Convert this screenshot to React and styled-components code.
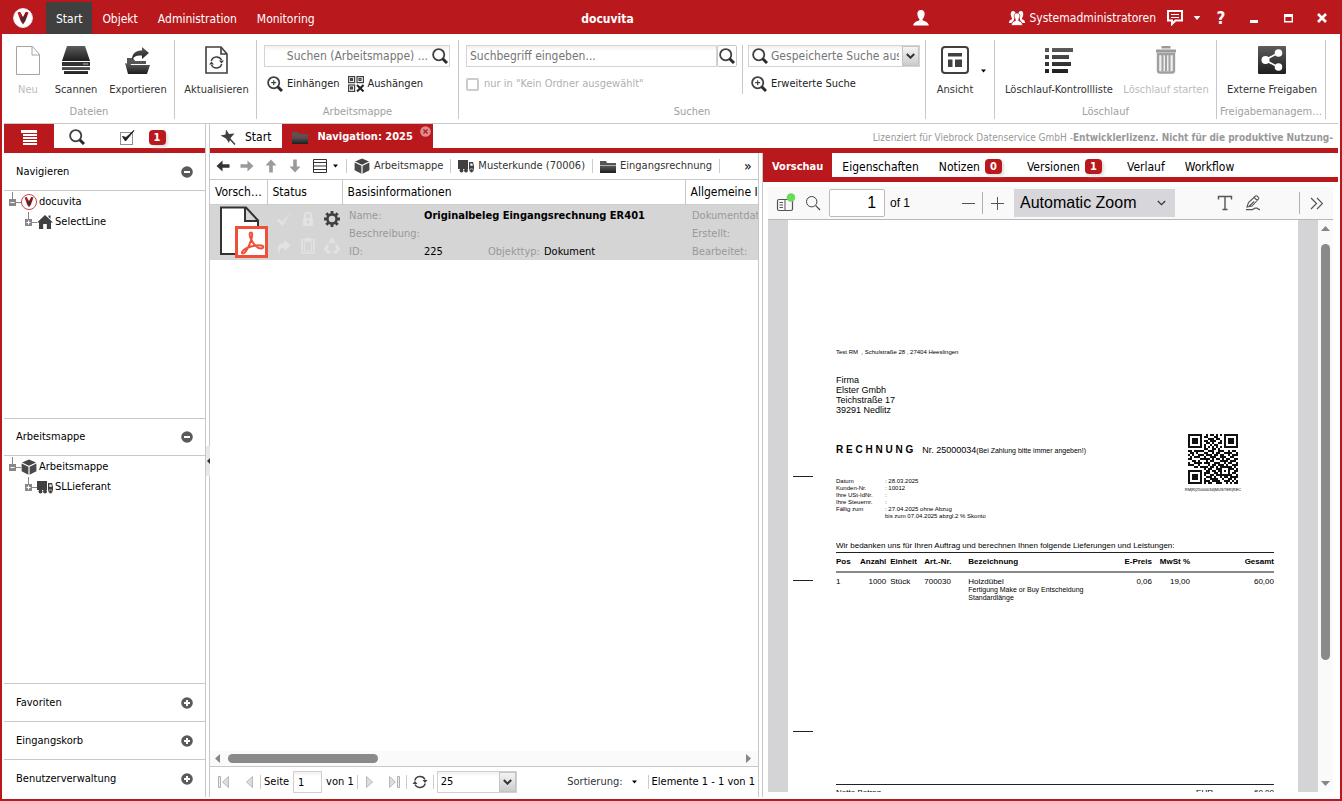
import React from "react";
import styled, { createGlobalStyle, css } from "styled-components";

const RED = "#b9181d";
const LINE = "#c8c8c8";
const INK = "#404040";
const UI_FONT = '"DejaVu Sans Condensed", "DejaVu Sans", sans-serif';
const DOC_FONT = '"Liberation Sans", Arial, sans-serif';

const Global = createGlobalStyle`
  *, *::before, *::after { box-sizing: border-box; }
  body { margin: 0; font: 11px/16px ${UI_FONT}; color: #000; background: #fff; }
  button, input, select { font: inherit; color: inherit; margin: 0; padding: 0; border: 0; border-radius: 0; background: none; }
  button { white-space: nowrap; cursor: pointer; }
  a { color: inherit; text-decoration: none; }
  h1, h2, p, ul { margin: 0; padding: 0; font-size: inherit; font-weight: inherit; list-style: none; }
  table { border-collapse: collapse; }
  svg { display: block; flex: none; }
`;

/* ---------- icons ---------- */

const Svg = ({ w = 16, h = w, vb = `0 0 ${w} ${h}`, children }) => (
  <svg width={w} height={h} viewBox={vb} aria-hidden="true">{children}</svg>
);

const Defs = () => (
  <svg width="0" height="0" aria-hidden="true">
    <defs>
      <linearGradient id="ink" x1="0" y1="0" x2="0" y2="1">
        <stop offset="0" stopColor="#5c5c5c" />
        <stop offset="1" stopColor="#1e1e1e" />
      </linearGradient>
    </defs>
  </svg>
);

const LogoIcon = ({ size = 20, ring }) => (
  <Svg w={size} vb="0 0 20 20">
    <circle cx="10" cy="10" r="9.4" fill="#fff" stroke={ring || "#eee"} strokeWidth="1" />
    <path d="M4.500 4.500 7.200 3.800 10 9v7.500L7.600 13z" fill={RED} />
    <path d="M15.500 4.500 12.800 3.800 10 9v7.500l2.400-3.500z" fill="#8e1116" />
    <path d="M8 6.500 10 10l2-3.500v5.500L10 14.500 8 12z" fill="#333" />
  </Svg>
);

const PageIcon = () => (
  <Svg w={24} h={29}>
    <path d="M.5.500h16l7 8v20H.500zM16 .5v8.500h7.500" fill="#fff" stroke="#a4a4a4" />
  </Svg>
);

const ScanIcon = () => (
  <Svg w={28} h={28}>
    <path d="M5 0h18l5 15H0z" fill="url(#ink)" />
    <path d="M0 16h28v4H0z" fill="#333" />
    <path d="M0 21h28v3H0zM2 25h24v3H2z" fill="url(#ink)" />
    <path d="M21 17.500h5v1h-5z" fill="#bbb" />
  </Svg>
);

const ExportIcon = () => (
  <Svg w={26} h={28}>
    <path d="M2 12h6l2 3h11v3H6L4 25 2 22z" fill="#555" />
    <path d="M5 19h20l-3 9H3L0 17l3 1z" fill="url(#ink)" />
    <path d="M7 14C7 7 11 4.500 17 4.500V1l7 6-7 6V9.500C12 9 9 10 7 14z" fill="url(#ink)" />
  </Svg>
);

const SyncArrows = () => (
  <g fill="none" stroke={INK} strokeWidth="1.500">
    <path d="M2.800 6.500a5.500 5.500 0 0 1 10.200-1M13.200 9.500A5.500 5.500 0 0 1 3 10.500" />
    <path d="M10.500 6h5L13 9zM5.500 10h-5L3 7z" fill={INK} stroke="none" />
  </g>
);

const SyncIcon = () => <Svg w={16}><SyncArrows /></Svg>;

const RefreshPageIcon = () => (
  <Svg w={23} h={28}>
    <path d="M1 1h15l6 7v19H1zM16 1v7h6" fill="#fff" stroke={INK} strokeWidth="1.600" />
    <g transform="translate(3.500 8.500)"><SyncArrows /></g>
  </Svg>
);

const LensIcon = ({ plus, thin, size = 16 }) => (
  <Svg w={size} vb="0 0 16 16">
    <circle cx="6.700" cy="6.700" r={thin ? 5.2 : 5.6} fill="none" stroke={INK} strokeWidth={thin ? 1 : 1.800} />
    <path d="m10.700 10.700 4.300 4.300" stroke={thin ? INK : "#2a2a2a"} strokeWidth={thin ? 1.200 : 3} />
    {plus && <path d="M4.200 6.700h5M6.700 4.200v5" stroke={INK} strokeWidth="1.200" />}
  </Svg>
);

const DetachIcon = () => (
  <Svg w={16}>
    <g fill="#fff" stroke={INK} strokeWidth="1.200">
      <rect x=".6" y=".6" width="6" height="6" /><rect x="9" y=".6" width="6.400" height="6" />
      <rect x=".6" y="9" width="6" height="6.400" />
      <rect x="2.500" y="2.500" width="2" height="2" /><rect x="11" y="2.500" width="2" height="2" /><rect x="2.500" y="11" width="2" height="2" />
    </g>
    <path d="m9 9 6.500 6.500m0-6.500L9 15.500" stroke="#222" strokeWidth="2" />
  </Svg>
);

const LayoutIcon = () => (
  <Svg w={28}>
    <rect x="1" y="1" width="26" height="26" rx="3" fill="#fff" stroke={INK} strokeWidth="2" />
    <path d="M7 7h14v3.500H7zM7 13.500h4.500V21H7zM14 13.500h7V21h-7z" fill={INK} />
  </Svg>
);

const ListIcon = () => (
  <Svg w={28} h={26}>
    <path d="M0 1h4v4H0zM7 1h21v4H7zM0 8h4v4H0zM7 8h17v4H7zM0 15h4v4H0zM7 15h19v4H7zM0 22h4v4H0zM7 22h16v4H7z" fill="url(#ink)" />
  </Svg>
);

const TrashIcon = () => (
  <Svg w={22} h={28}>
    <path d="M8 2.500V1h6v1.500M1 5h20" stroke="#9a9a9a" strokeWidth="3" fill="none" />
    <path d="M3 8v16.500c0 1.500.5 2 2 2h12c1.500 0 2-.5 2-2V8z" fill="#eee" stroke="#a0a0a0" strokeWidth="2.400" />
    <path d="M7.500 9v16M11 9v16M14.500 9v16" stroke="#a0a0a0" strokeWidth="2" />
  </Svg>
);

const ShareIcon = () => (
  <Svg w={28}>
    <rect width="28" height="28" rx="1" fill="url(#ink)" />
    <path d="M7 14 20 7M7 14l13 7" stroke="#fff" strokeWidth="1.600" />
    <circle cx="7.500" cy="14" r="4" fill="#fff" /><circle cx="20.500" cy="7" r="3.800" fill="#fff" /><circle cx="20.500" cy="21" r="3.800" fill="#fff" />
  </Svg>
);

const UserIcon = () => (
  <Svg w={16}>
    <path d="M8 0c2.500 0 4 2 3.600 4.500C11.300 6.500 10.500 8 9.600 9v1.300c1.500.9 5.900 1.500 6.200 5.200H.2c.3-3.700 4.700-4.300 6.200-5.200V9C5.500 8 4.700 6.500 4.400 4.500 4 2 5.500 0 8 0z" fill="#fff" />
  </Svg>
);

const GroupIcon = () => (
  <Svg w={16}>
    <path d="M4 1c1.800 0 2.800 1.300 2.500 3.500L6 7.500 5 9v1L2.500 13H0c0-2.500 1-3 3-3.800V8C1.500 6.500.8 1 4 1zM12 1c-1.800 0-2.800 1.300-2.500 3.500l.5 3 1 1.500v1l2.500 3H16c0-2.500-1-3-3-3.800V8c1.500-1.500 2.200-7-1-7z" fill="#fff" />
    <path d="M8 3c2.200 0 3.200 1.700 2.800 3.700L9.700 9.500v1.200c1.500.6 3.600 1.200 3.800 4.800h-11c.2-3.600 2.300-4.200 3.800-4.800V9.500L5.200 6.700C4.800 4.700 5.800 3 8 3z" fill="#fff" stroke={RED} strokeWidth=".7" />
  </Svg>
);

const ChatIcon = () => (
  <Svg w={16}>
    <path d="M1 1h14v9.500H8.500L5 14v-3.500H1z" fill="none" stroke="#fff" strokeWidth="2" />
    <path d="M4 4.500h8M4 7.500h8" stroke="#fff" strokeWidth="1.200" />
  </Svg>
);

const Caret = ({ color = "#000", size = 5 }) => (
  <Svg w={size} h={4} vb="0 0 5 3"><path d="M0 0h5L2.500 3z" fill={color} /></Svg>
);

const MinIcon = () => <Svg w={10} h={12}><path d="M1 8h8v3H1z" fill="#fff" /></Svg>;
const MaxIcon = () => <Svg w={9}><path d="M.7 1.500h7.600v6.300H.7z" fill="none" stroke="#fff" strokeWidth="1.400" /><path d="M0 0h9v3H0z" fill="#fff" /></Svg>;
const CloseIcon = () => <Svg w={10}><path d="m1 1 8 8m0-8L1 9" stroke="#fff" strokeWidth="2.600" /></Svg>;

const MenuIcon = () => (
  <Svg w={16} h={15}><path d="M0 0h16v3H0zM2 4h14v2H2zM2 7h14v2H2zM2 10h14v2H2zM2 13h14v2H2z" fill="#fff" /></Svg>
);

const TickBoxIcon = () => (
  <Svg w={16}>
    <rect x="1.500" y="3.500" width="12" height="12" fill="none" stroke="#222" strokeDasharray="1 1" />
    <path d="m3.500 7.500 3 4.500L15 1.500 7 8.500z" fill="#222" stroke="#222" />
  </Svg>
);

const PinIcon = () => (
  <Svg w={16}>
    <path d="M6 .5 9 5l5.500-.5-4 4.500L9 14 6 9.500.5 6.500 5.500 5.500z" fill={INK} />
    <path d="m9 9 6 6.500" stroke={INK} strokeWidth="1.500" />
  </Svg>
);

const FolderIcon = () => (
  <Svg w={16} h={13}><path d="M0 1h6l1 2h9v2H0z" fill="#555" /><path d="M0 5.500h16V13H0z" fill="url(#ink)" /></Svg>
);

const TabCloseIcon = () => (
  <Svg w={11}><circle cx="5.500" cy="5.500" r="5.300" fill="#dc8c8e" /><path d="m3.500 3.500 4 4m0-4-4 4" stroke={RED} strokeWidth="1.300" /></Svg>
);

const ToggleIcon = ({ plus }) => (
  <Svg w={12}>
    <circle cx="6" cy="6" r="5.800" fill="#5a5a5a" />
    <path d={plus ? "M3 6h6M6 3v6" : "M3 6h6"} stroke="#fff" strokeWidth="2" />
  </Svg>
);

const HouseIcon = () => (
  <Svg w={16}><path d="M8 1 16 8.500h-2V15H9.800v-5H6.200v5H2V8.500H0zM11.500 1.500h2v3.500l-2-2z" fill={INK} /></Svg>
);

const BoxIcon = () => (
  <Svg w={16}>
    <path d="m8 .5 7 3-7 3.300-7-3.300z" fill="#444" />
    <path d="m.6 4.500 6.800 3.200v8L.6 12.200zM15.400 4.500 8.600 7.700v8l6.800-3.500z" fill="#4a4a4a" />
  </Svg>
);

const TruckIcon = () => (
  <Svg w={16} h={13}>
    <path d="M0 0h10v9H0zM11 2h4l1 4v5h-5z" fill={INK} /><path d="M12.300 3.500h2l.6 2.300h-2.600z" fill="#fff" />
    <circle cx="3.500" cy="10.500" r="2" fill={INK} /><circle cx="8" cy="10.500" r="2" fill={INK} /><circle cx="13.500" cy="10.700" r="2" fill={INK} stroke="#fff" strokeWidth=".6" />
  </Svg>
);

const ArrowIcon = ({ turn = 0, color = "#9a9a9a" }) => (
  <Svg w={14} vb="0 0 14 14">
    <path transform={`rotate(${turn} 7 7)`} d="M.5 7 6.500 1.500v3.700h7v3.600h-7v3.700z" fill={color} />
  </Svg>
);

const RowsIcon = () => (
  <Svg w={14}><path d="M.5.500h13v13H.5zM.5 3.500h13M.5 7h13M.5 10.500h13" fill="none" stroke="#333" /></Svg>
);

const PdfFileIcon = () => (
  <Svg w={48} h={52}>
    <path d="M1 1.500h25l12 13V48H1zM25 1.500V15h13" fill="#fff" stroke="#333" strokeWidth="2" />
    <rect x="16.500" y="21.500" width="30" height="29" fill="#fff" stroke="#ef5038" strokeWidth="3" />
    <path d="M31 26.500c-2 0-1.600 3 0 6.500 2 4.600 6 9.500 10 9.500 3 0 3-2.700 0-3-4.500-.5-11 .8-15 3-3.500 2-5 4.500-3.500 5 2 .6 5-4.500 7-9 2-4.300 4-12 1.500-12z" fill="none" stroke="#ef5038" strokeWidth="2" />
  </Svg>
);

const GearIcon = () => (
  <Svg w={16}>
    <circle cx="8" cy="8" r="4.600" fill="none" stroke={INK} strokeWidth="2.600" />
    <path d="M8 0v3M8 13v3M0 8h3M13 8h3M2.300 2.300l2.200 2.200M11.500 11.500l2.200 2.200M2.300 13.700l2.200-2.200M11.500 4.500l2.200-2.200" stroke={INK} strokeWidth="2.800" />
  </Svg>
);

const FAINT = "#e2e2e2";
const CheckFaint = () => <Svg w={16}><path d="m1 9 2-1.500L6 11l8.500-9L6.500 15z" fill={FAINT} /></Svg>;
const LockFaint = () => <Svg w={16}><path d="M3 7h10v8H3z" fill={FAINT} /><path d="M5 7V4.500a3 3 0 0 1 6 0V7" fill="none" stroke={FAINT} strokeWidth="2" /><path d="M7.300 9.500h1.400v3H7.300z" fill="#c8c8c8" /></Svg>;
const ForwardFaint = () => <Svg w={16}><path d="M8 2 15 7.500 8 13v-3.500c-3 0-4 1.500-4.500 5.500C0 10 2 5 8 5z" fill={FAINT} /></Svg>;
const ClipFaint = () => <Svg w={16}><path d="M2 2h12v13H2z" fill="none" stroke={FAINT} strokeWidth="1.600" /><path d="M4.500 4h7v9h-7z" fill="none" stroke={FAINT} /><path d="M5 0h6v3H5z" fill={FAINT} /></Svg>;
const RecycleFaint = () => <Svg w={16}><path d="M5.500 5 8 1.500 10.500 5M12 7l2.500 4-2.500 3H9.500M6.500 14H4l-2.500-3L4 7" fill="none" stroke={FAINT} strokeWidth="2.800" /></Svg>;

const StepIcon = ({ next, bar }) => (
  <Svg w={12} h={14}>
    <g transform={next ? "translate(12 0) scale(-1 1)" : undefined}>
      {bar && <path d="M.5 1.500h2v11h-2z" fill="#eee" stroke="#b0b0b0" />}
      <path d="M10.500 1.500v11L4.500 7z" fill="#ddd" stroke="#b8b8b8" />
    </g>
  </Svg>
);

const ScrollArrow = ({ turn = 0 }) => (
  <Svg w={9} vb="0 0 9 9"><path transform={`rotate(${turn} 4.500 4.500)`} d="M4.500 2 9 7H0z" fill="#868686" /></Svg>
);

const SidebarIcon = () => (
  <Svg w={20} h={20}>
    <rect x="2.500" y="6.500" width="15" height="11" rx="1.500" fill="none" stroke="#555" strokeWidth="1.200" />
    <path d="M10 6.500v11M4.500 9.500h3.500M4.500 12h3.500M4.500 14.500h3.500" stroke="#555" />
    <circle cx="16" cy="4.500" r="4.300" fill="#66dd55" />
  </Svg>
);

const TextToolIcon = () => (
  <Svg w={16}><path d="M1.500 4.500v-3h13v3M8 1.500v13M5.500 14.500h5" fill="none" stroke="#555" strokeWidth="1.400" /></Svg>
);
const DrawToolIcon = () => (
  <Svg w={16}>
    <path d="m2 12 1.500-4.500 7-6.500c1-1 4 1.500 3 3L7 11zM9.500 3l3 2.500M4 11.500l5-5" fill="none" stroke="#555" strokeWidth="1.100" />
    <path d="M1 14.700h5.500c2 0 2-1.500 4-1.500h1.500c1 0 1 1.500 3 1.500" fill="none" stroke="#555" strokeWidth="1.200" />
  </Svg>
);
const MoreIcon = () => <Svg w={13}><path d="m1 1 5.500 5.500L1 12M7 1l5.500 5.500L7 12" fill="none" stroke="#555" strokeWidth="1.200" /></Svg>;
const ChevronIcon = ({ bold, color = "#333" }) => (
  <Svg w={9} h={6}><path d="m.8 1 3.700 3.700L8.200 1" fill="none" stroke={color} strokeWidth={bold ? 2 : 1.200} /></Svg>
);
const MinusIcon = () => <Svg w={13}><path d="M0 6.500h13" stroke="#555" /></Svg>;
const PlusIcon = () => <Svg w={13}><path d="M0 6.500h13M6.500 0v13" stroke="#555" /></Svg>;

const QR_ROWS = [
  "1111111001011010101111111", "1000001011000110001000001", "1011101000111011001011101",
  "1011101011011100101011101", "1011101001101001101011101", "1000001010010110001000001",
  "1111111010101010101111111", "0000000011001101000000000", "1101111100111001110010110",
  "0110100011001011001111001", "1010011101110110110010111", "0101110010011100111001100",
  "1100001111101011010110011", "0011010001011000111101110", "1001111011100111001011001",
  "1110010000101101110100111", "0001101111011010111111010", "0000000010110011100011101",
  "1111111001101101101010011", "1000001011100110100010110", "1011101010011011111111001",
  "1011101001110100101101111", "1011101010011110010011010", "1000001011101111001110101",
  "1111111010110011100101011",
];
const QR_PATH = QR_ROWS.map((r, y) => [...r].map((c, x) => (c === "1" ? `M${x} ${y}h1v1h-1z` : "")).join("")).join("");
const QrCode = () => <Svg w={50} vb="0 0 25 25"><path d={QR_PATH} fill="#111" shapeRendering="crispEdges" /></Svg>;

/* ---------- window frame ---------- */

const Window = styled.div`
  display: flex;
  flex-direction: column;
  height: 100vh;
  background: #fff;
  border: 2px solid ${RED};
  border-top: 0;
  overflow: hidden;
`;

const TitleBar = styled.header`
  display: flex;
  align-items: stretch;
  flex: none;
  height: 34px;
  background: ${RED};
  color: #fff;
  font-size: 12px;
`;
const LogoBox = styled.div`
  display: flex;
  align-items: center;
  justify-content: center;
  width: 42px;
  margin-right: 2px;
  padding-top: 2px;
`;
const MenuTab = styled.button`
  margin-top: 2px;
  padding: 2px 10px 0;
  background: ${(p) => (p.$active ? "#404040" : "none")};
`;
const Title = styled.h1`
  flex: 1;
  text-align: center;
  font-weight: bold;
  line-height: 38px;
`;
const TitleActions = styled.div`
  display: flex;
  align-items: center;
  padding-top: 2px;
`;
const TitleButton = styled.button`
  display: flex;
  align-items: center;
  justify-content: center;
  gap: 5px;
  width: ${(p) => p.$width || "auto"};
  font-size: ${(p) => (p.$big ? "17px" : "inherit")};
  font-weight: ${(p) => (p.$big ? "bold" : "inherit")};
`;
const RoleButton = styled(TitleButton)`
  margin-left: 58px;
  padding-right: 6px;
`;

/* ---------- ribbon ---------- */

const Ribbon = styled.nav`
  display: flex;
  flex: none;
  height: 90px;
  margin: 0 2px;
  padding: 6px 0 4px;
  border-bottom: 1px solid ${LINE};
`;
const Group = styled.section`
  display: flex;
  flex-direction: column;
  flex: 0 0 ${(p) => p.$width};
  border-right: 1px solid ${LINE};
`;
const GroupBody = styled.div`
  display: flex;
  justify-content: ${(p) => p.$justify || "flex-start"};
  flex: 1;
  padding: 5px ${(p) => p.$right || "5px"} 0 7px;
`;
const GroupName = styled.h2`
  height: 16px;
  color: #a0a0a0;
  line-height: 18px;
  text-align: center;
  white-space: nowrap;
`;
const BigButton = styled.button`
  display: flex;
  flex-direction: column;
  align-items: center;
  gap: 7px;
  width: ${(p) => p.$width};
  height: 53px;
  color: #333;
  &:disabled { color: #bbb; }
`;
const BigIcon = styled.span`
  display: flex;
  align-items: center;
  height: 30px;
`;
const Stack = styled.div`
  display: flex;
  flex-direction: column;
  gap: 9px;
  flex: ${(p) => p.$flex || "1"};
  ${(p) => p.$divided && css`
    margin-left: 5px;
    padding-left: 5px;
    height: 49px;
    border-left: 1px solid ${LINE};
  `}
`;
const Line = styled.div`
  display: flex;
  align-items: center;
  gap: ${(p) => p.$gap || "0px"};
`;
const Field = styled.div`
  display: flex;
  align-items: center;
  flex: 1;
  gap: 3px;
  min-width: 0;
  height: 22px;
  padding: 0 0 0 3px;
  border: 1px solid #d4d4d4;
  background: linear-gradient(#f0f0f0, #fff 5px);
  font-size: 12px;
`;
const FieldInput = styled.input`
  flex: 1;
  min-width: 0;
  width: 100%;
  height: 18px;
  outline: none;
  text-align: ${(p) => p.$align || "left"};
  &::placeholder { color: #757575; opacity: 1; }
`;
const LensButton = styled.button`
  display: flex;
  align-items: center;
  justify-content: center;
  width: ${(p) => (p.$boxed ? "20px" : "18px")};
  height: 22px;
  border: ${(p) => (p.$boxed ? "1px solid #c8c8c8" : "0")};
  border-radius: ${(p) => (p.$boxed ? "2px" : "0")};
`;
const Trigger = styled.button`
  display: flex;
  align-items: center;
  justify-content: center;
  flex: none;
  width: 17px;
  height: 20px;
  background: linear-gradient(#f4f4f4, #ccc);
  border: 1px solid #c4c4c4;
`;
const LinkButton = styled.button`
  display: flex;
  align-items: center;
  gap: 4px;
  padding: 0 3px;
  color: #222;
`;
const CheckLabel = styled.label`
  display: flex;
  align-items: center;
  gap: 5px;
  height: 16px;
  color: #b0b0b0;
`;
const Check = styled.input`
  appearance: none;
  width: 13px;
  height: 13px;
  border: 2px solid #ccc;
  border-radius: 2px;
`;
const CaretHolder = styled.span`
  display: flex;
  align-items: flex-end;
  height: 28px;
  padding-left: 4px;
`;

/* ---------- work area ---------- */

const Work = styled.div`
  display: flex;
  flex: 1;
  min-height: 0;
  margin: 0 2px 2px;
`;
const Sidebar = styled.aside`
  display: flex;
  flex-direction: column;
  flex: none;
  width: 202px;
  border-right: 1px solid ${LINE};
`;
const Splitter = styled.div`
  display: flex;
  align-items: center;
  flex: none;
  width: 4px;
  border-right: 1px solid ${LINE};
`;
const SplitHandle = styled.button`
  flex: none;
  width: 4px;
  height: 30px;
  background: #e8e8e8;
`;
const TabStrip = styled.div`
  display: flex;
  flex: none;
  height: 29px;
  border-bottom: 5px solid ${RED};
`;
const SideTab = styled.button`
  display: flex;
  align-items: center;
  justify-content: center;
  gap: 14px;
  width: ${(p) => p.$width};
  height: 24px;
  padding-top: 2px;
  background: ${(p) => (p.$active ? RED : "none")};
`;
const Badge = styled.span`
  min-width: 17px;
  height: 15px;
  border-radius: 4px;
  background: ${RED};
  box-shadow: 2px 2px 3px #ddd;
  color: #fff;
  font-size: 11px;
  font-weight: bold;
  line-height: 15px;
  text-align: center;
`;
const SectionHead = styled.h2`
  display: flex;
  align-items: center;
  justify-content: space-between;
  flex: none;
  height: 38px;
  padding: 0 12px;
  border-top: ${(p) => (p.$first ? "0" : `1px solid ${LINE}`)};
  border-bottom: ${(p) => (p.$open ? `1px solid ${LINE}` : "0")};
`;
const Tree = styled.ul`
  flex: 1;
  padding-top: 1px;
  overflow: hidden;
`;
const TreeItem = styled.li`
  display: flex;
  align-items: center;
  height: 20px;
  padding-left: ${(p) => p.$indent};
`;
const TreeLink = styled.a`
  display: flex;
  align-items: center;
  gap: 2px;
`;

const Expander = ({ open }) => (
  <Svg w={12} h={20}>
    <path d={open ? "M3.500 0v7M7 10.500h5" : "M3.500 0v7M7 10.500h5"} stroke="#888" />
    <rect y="7" width="7" height="7" fill="#888" />
    <path d={open ? "M1.500 10.500h4" : "M1.500 10.500h4M3.500 8.500v4"} stroke="#fff" />
  </Svg>
);

const Main = styled.main`
  display: flex;
  flex-direction: column;
  flex: 1;
  min-width: 0;
`;
const MainTab = styled.button`
  display: flex;
  align-items: center;
  gap: 9px;
  height: 24px;
  padding: ${(p) => (p.$active ? "2px 7px 0 10px" : "2px 11px 0 10px")};
  background: ${(p) => (p.$active ? RED : "none")};
  color: ${(p) => (p.$active ? "#fff" : "#000")};
  font-weight: ${(p) => (p.$active ? "bold" : "normal")};
  font-size: ${(p) => (p.$active ? "11px" : "12px")};
`;
const ActiveTab = styled.div`
  display: flex;
  align-items: flex-start;
  padding: 0 2px 0 0;
  background: ${RED};
`;
const TabClose = styled.button`
  padding-top: 2px;
`;
const License = styled.p`
  margin-left: auto;
  padding-right: 5px;
  color: #999;
  font-size: 10px;
  line-height: 28px;
  white-space: nowrap;
`;
const Panes = styled.div`
  display: flex;
  flex: 1;
  min-height: 0;
`;
const ListPane = styled.section`
  display: flex;
  flex-direction: column;
  flex: 549 1 0;
  min-width: 0;
  border-right: 1px solid ${LINE};
`;
const PathBar = styled.nav`
  display: flex;
  align-items: center;
  flex: none;
  height: 27px;
  padding: 0 8px 0 6px;
  border-bottom: 1px solid ${LINE};
  overflow: hidden;
`;
const IconButton = styled.button`
  display: flex;
  align-items: center;
  justify-content: center;
  gap: 6px;
  flex: none;
  width: ${(p) => p.$width || "24px"};
  height: ${(p) => p.$height || "20px"};
`;
const Gap = styled.span`
  flex: none;
  width: ${(p) => p.$width};
`;
const Crumb = styled.a`
  display: flex;
  align-items: center;
  gap: 4px;
  height: 14px;
  padding: 0 7px 0 7px;
  border-left: 1px solid #ccc;
  color: #333;
  white-space: nowrap;
`;
const EndMark = styled.button`
  height: 14px;
  margin-left: auto;
  padding-left: 24px;
  border-left: 1px solid #ccc;
  font-size: 14px;
  line-height: 12px;
`;
const ListScroll = styled.div`
  flex: 1;
  overflow: hidden;
`;
const DocTable = styled.table`
  width: 780px;
  table-layout: fixed;
`;
const HeadCell = styled.th`
  width: ${(p) => p.$width || "auto"};
  height: 24px;
  padding: ${(p) => (p.$first ? "0 1px 0 5px" : "0 5px")};
  border-left: ${(p) => (p.$first ? "0" : `1px solid ${LINE}`)};
  border-bottom: 1px dotted ${LINE};
  font-size: 12px;
  font-weight: normal;
  text-align: left;
  white-space: nowrap;
`;
const Cell = styled.td`
  height: 55px;
  padding: ${(p) => p.$pad || "0 6px"};
  background: #d5d5d5;
  vertical-align: top;
`;
const StatusGrid = styled.div`
  display: grid;
  grid-template-columns: repeat(3, 16px);
  gap: 11px 8px;
`;
const Facts = styled.div`
  display: grid;
  grid-template-columns: ${(p) => p.$cols || "auto"};
  grid-auto-rows: 18px;
  line-height: 20px;
  padding-top: 1px;
  padding-left: 1px;
  white-space: nowrap;
`;
const Key = styled.span`
  color: #999;
`;
const Val = styled.span`
  grid-column: ${(p) => p.$span || "auto"};
  font-weight: ${(p) => (p.$bold ? "bold" : "normal")};
`;
const ScrollRow = styled.div`
  display: flex;
  align-items: center;
  flex: none;
  gap: 6px;
  height: 16px;
  padding: 0 5px 0 3px;
  background: #fafafa;
  border-bottom: 1px solid ${LINE};
`;
const ThumbX = styled.div`
  width: 150px;
  height: 9px;
  margin-right: auto;
  border-radius: 5px;
  background: #8a8a8a;
`;
const Pager = styled.div`
  display: flex;
  align-items: center;
  flex: none;
  height: 30px;
  padding: 0 0 0 2px;
  white-space: nowrap;
`;
const PagerPart = styled.div`
  display: flex;
  align-items: center;
  gap: 4px;
  height: 14px;
  padding: 0 3px;
  border-left: 1px solid #ccc;
`;
const PageInput = styled.input`
  width: 29px;
  height: 22px;
  padding-left: 4px;
  border: 1px solid #d0d0d0;
  background: linear-gradient(#f0f0f0, #fff 5px);
`;
const SizeBox = styled.div`
  display: flex;
  align-items: center;
  width: 80px;
  height: 22px;
  border: 1px solid #d0d0d0;
  background: linear-gradient(#f0f0f0, #fff 5px);
`;
const SizeSelect = styled.select`
  flex: 1;
  height: 20px;
  padding-left: 3px;
  appearance: none;
  outline: none;
`;
const SortButton = styled.button`
  display: flex;
  align-items: center;
  gap: 9px;
  margin-left: auto;
  padding-right: 11px;
  color: #333;
`;

/* ---------- preview ---------- */

const Preview = styled.section`
  display: flex;
  flex-direction: column;
  flex: 576 1 0;
  min-width: 0;
`;
const PreviewTab = styled.button`
  display: flex;
  align-items: center;
  gap: 5px;
  height: 24px;
  padding: 3px ${(p) => p.$pad || "10px"} 0;
  background: ${(p) => (p.$active ? RED : "none")};
  color: ${(p) => (p.$active ? "#fff" : "#000")};
  font-weight: ${(p) => (p.$active ? "bold" : "normal")};
  font-size: ${(p) => (p.$active ? "11px" : "12px")};
`;
const Viewer = styled.div`
  display: flex;
  flex-direction: column;
  flex: 1;
  min-height: 0;
  margin: 5px;
`;
const PdfBar = styled.div`
  display: flex;
  align-items: center;
  flex: none;
  height: 33px;
  background: #f9f9fa;
  border-bottom: 1px solid #b8b8b8;
  font-family: ${DOC_FONT};
`;
const PdfPage = styled.input`
  width: 56px;
  height: 28px;
  margin: 0 5px 0 4px;
  padding-right: 8px;
  border: 1px solid #bbb;
  border-radius: 2px;
  background: #fff;
  font-size: 16px;
  text-align: right;
`;
const PdfCount = styled.span`
  flex: 1;
  font-size: 12px;
`;
const Rule = styled.span`
  width: 1px;
  height: 22px;
  background: #b0b0b0;
`;
const ZoomBox = styled.label`
  display: flex;
  align-items: center;
  width: 161px;
  height: 28px;
  padding: 0 9px 0 6px;
  margin: 0 36px 0 3px;
  background: #d7d7db;
`;
const ZoomSelect = styled.select`
  flex: 1;
  width: 100%;
  appearance: none;
  outline: none;
  font-size: 16px;
  line-height: 20px;
`;
const PdfBody = styled.div`
  display: flex;
  flex: 1;
  min-height: 0;
  overflow: hidden;
`;
const Canvas = styled.div`
  flex: 1;
  min-width: 0;
  padding: 0 20px;
  background: #d4d4d7;
  overflow: hidden;
`;
const Paper = styled.article`
  display: flex;
  padding-right: 24px;
  background: #fff;
  font: 8px/9px ${DOC_FONT};
`;
const Folds = styled.div`
  flex: none;
  width: 48px;
  padding: 256px 0 0 5px;
`;
const Fold = styled.div`
  width: 20px;
  height: 1px;
  margin-bottom: ${(p) => p.$gap};
  background: #222;
`;
const Sheet = styled.div`
  flex: 1;
  min-width: 0;
  padding-top: 128px;
`;
const Tiny = styled.p`
  font-size: 6px;
  line-height: 8px;
`;
const Address = styled.address`
  margin: 19px 0 22px;
  font-size: 9px;
  font-style: normal;
  line-height: 10px;
`;
const InvoiceTop = styled.div`
  display: flex;
  justify-content: space-between;
  height: 104px;
`;
const InvoiceTitle = styled.h2`
  display: flex;
  align-items: baseline;
  padding-top: 7px;
  margin-bottom: 21px;
  font-size: 9px;
  line-height: 12px;
`;
const Spaced = styled.strong`
  margin-right: 9px;
  font-size: 10px;
`;
const Note = styled.span`
  font-size: 7px;
`;
const Meta = styled.dl`
  display: grid;
  grid-template-columns: 49px 1fr;
  margin: 0;
  font-size: 6px;
  line-height: 7px;
`;
const MetaText = styled.dd`
  margin: 0;
`;
const QrBox = styled.figure`
  display: flex;
  flex-direction: column;
  align-items: center;
  gap: 2px;
  width: 62px;
  margin: -3px 30px 0 0;
`;
const QrText = styled.figcaption`
  font-size: 4px;
  line-height: 8px;
  white-space: nowrap;
`;
const ItemTable = styled.table`
  width: 100%;
  margin-top: 2px;
  border-top: 1px solid #222;
`;
const ItemHead = styled.th`
  width: ${(p) => p.$width || "auto"};
  height: 19px;
  padding: 0 0 0 ${(p) => p.$lead || "0px"};
  border-bottom: 2px solid #888;
  text-align: ${(p) => p.$align || "left"};
`;
const ItemCell = styled.td`
  padding: 4px 0 0 ${(p) => p.$lead || "0px"};
  text-align: ${(p) => p.$align || "left"};
  vertical-align: top;
`;
const ItemText = styled.p`
  font-size: 7px;
  line-height: 8px;
`;
const Totals = styled.div`
  display: grid;
  grid-template-columns: 1fr 60px 61px;
  margin-top: 182px;
  padding-top: 3px;
  border-top: 1px solid #222;
  text-align: right;
`;
const TotalName = styled.span`
  text-align: left;
`;
const ScrollY = styled.div`
  display: flex;
  flex-direction: column;
  align-items: center;
  flex: none;
  width: 15px;
  padding: 4px 0;
  background: #fafafa;
`;
const ThumbY = styled.div`
  flex: 0 1 416px;
  width: 9px;
  margin: 11px 0 auto;
  border-radius: 5px;
  background: #8a8a8a;
`;

const ITEM_COLUMNS = [
  { name: "Pos", width: "24px", value: "1" },
  { name: "Anzahl", width: "26px", align: "right", value: "1000" },
  { name: "Einheit", width: "34px", lead: "4px", value: "Stück" },
  { name: "Art.-Nr.", width: "44px", lead: "4px", value: "700030" },
  { name: "Bezeichnung", lead: "4px", value: "Holzdübel", notes: ["Fertigung Make or Buy Entscheidung", "Standardlänge"] },
  { name: "E-Preis", width: "40px", align: "right", value: "0,06" },
  { name: "MwSt %", width: "38px", align: "right", value: "19,00" },
  { name: "Gesamt", width: "84px", align: "right", value: "60,00" },
];

const META = [
  ["Datum", ": 28.03.2025"], ["Kunden-Nr.", ": 10012"], ["Ihre USt-IdNr.", ":"], ["Ihre Steuernr.", ":"],
  ["Fällig zum", ": 27.04.2025 ohne Abzug"], ["", "bis zum 07.04.2025 abzgl.2 % Skonto"],
];

function Invoice() {
  return (
    <Paper>
      <Folds><Fold $gap="103px" /><Fold $gap="150px" /><Fold $gap="0px" /></Folds>
      <Sheet>
        <Tiny>Test RM&nbsp; , Schulstraße 28 , 27404 Heeslingen</Tiny>
        <Address>Firma<br />Elster Gmbh<br />Teichstraße 17<br />39291 Nedlitz</Address>
        <InvoiceTop>
          <div>
            <InvoiceTitle>
              <Spaced>R E C H N U N G</Spaced>Nr. 25000034<Note>(Bei Zahlung bitte immer angeben!)</Note>
            </InvoiceTitle>
            <Meta>
              {META.map(([k, v]) => (
                <React.Fragment key={k}><dt>{k}</dt><MetaText>{v}</MetaText></React.Fragment>
              ))}
            </Meta>
          </div>
          <QrBox><QrCode /><QrText>RM|R|25000034|MUSTER|REC</QrText></QrBox>
        </InvoiceTop>
        <p>Wir bedanken uns für Ihren Auftrag und berechnen Ihnen folgende Lieferungen und Leistungen:</p>
        <ItemTable>
          <thead>
            <tr>{ITEM_COLUMNS.map((c) => <ItemHead key={c.name} $width={c.width} $align={c.align} $lead={c.lead}>{c.name}</ItemHead>)}</tr>
          </thead>
          <tbody>
            <tr>
              {ITEM_COLUMNS.map((c) => (
                <ItemCell key={c.name} $align={c.align} $lead={c.lead}>
                  {c.value}
                  {c.notes?.map((n) => <ItemText key={n}>{n}</ItemText>)}
                </ItemCell>
              ))}
            </tr>
          </tbody>
        </ItemTable>
        <Totals><TotalName>Netto Betrag</TotalName><span>EUR</span><span>60,00</span></Totals>
      </Sheet>
    </Paper>
  );
}

const Big = ({ icon, label, width, disabled }) => (
  <BigButton $width={width} disabled={disabled}><BigIcon>{icon}</BigIcon>{label}</BigButton>
);

function RibbonBar() {
  return (
    <Ribbon aria-label="Menüband">
      <Group $width="171px">
        <GroupBody $justify="space-between">
          <Big icon={<PageIcon />} label="Neu" width="34px" disabled />
          <Big icon={<ScanIcon />} label="Scannen" width="46px" />
          <Big icon={<ExportIcon />} label="Exportieren" width="62px" />
        </GroupBody>
        <GroupName>Dateien</GroupName>
      </Group>
      <Group $width="82px">
        <GroupBody $justify="center"><Big icon={<RefreshPageIcon />} label="Aktualisieren" width="68px" /></GroupBody>
      </Group>
      <Group $width="202px">
        <GroupBody $right="8px">
          <Stack>
            <Line>
              <Field>
                <FieldInput aria-label="Suchen in Arbeitsmappe" placeholder="Suchen (Arbeitsmappe) ..." $align="right" />
                <LensButton aria-label="Suchen"><LensIcon /></LensButton>
              </Field>
            </Line>
            <Line $gap="2px">
              <LinkButton><LensIcon plus />Einhängen</LinkButton>
              <LinkButton><DetachIcon />Aushängen</LinkButton>
            </Line>
          </Stack>
        </GroupBody>
        <GroupName>Arbeitsmappe</GroupName>
      </Group>
      <Group $width="467px">
        <GroupBody>
          <Stack>
            <Line>
              <Field><FieldInput aria-label="Suchbegriff" placeholder="Suchbegriff eingeben..." /></Field>
              <LensButton $boxed aria-label="Suchen"><LensIcon /></LensButton>
            </Line>
            <CheckLabel><Check type="checkbox" disabled />nur in "Kein Ordner ausgewählt"</CheckLabel>
          </Stack>
          <Stack $divided $flex="0 0 178px">
            <Line>
              <Field>
                <LensIcon />
                <FieldInput aria-label="Gespeicherte Suche" placeholder="Gespeicherte Suche aus" />
                <Trigger aria-label="Auswahl öffnen"><ChevronIcon bold /></Trigger>
              </Field>
            </Line>
            <Line><LinkButton><LensIcon plus />Erweiterte Suche</LinkButton></Line>
          </Stack>
        </GroupBody>
        <GroupName>Suchen</GroupName>
      </Group>
      <Group $width="69px">
        <GroupBody>
          <Big icon={<LayoutIcon />} label="Ansicht" width="44px" />
          <CaretHolder><Caret /></CaretHolder>
        </GroupBody>
      </Group>
      <Group $width="222px">
        <GroupBody $justify="space-between">
          <Big icon={<ListIcon />} label="Löschlauf-Kontrollliste" width="114px" />
          <Big icon={<TrashIcon />} label="Löschlauf starten" width="90px" disabled />
        </GroupBody>
        <GroupName>Löschlauf</GroupName>
      </Group>
      <Group $width="109px">
        <GroupBody $justify="center"><Big icon={<ShareIcon />} label="Externe Freigaben" width="95px" /></GroupBody>
        <GroupName>Freigabemanagem…</GroupName>
      </Group>
    </Ribbon>
  );
}

const Section = ({ name, first, open }) => (
  <SectionHead $first={first} $open={open}>
    {name}
    <button aria-label={`${name} umschalten`}><ToggleIcon plus={!open} /></button>
  </SectionHead>
);

function Side() {
  return (
    <Sidebar>
      <TabStrip>
        <SideTab $active $width="50px" aria-label="Navigation"><MenuIcon /></SideTab>
        <SideTab $width="46px" aria-label="Suche"><LensIcon /></SideTab>
        <SideTab $width="84px" aria-label="Aufgaben"><TickBoxIcon /><Badge>1</Badge></SideTab>
      </TabStrip>
      <Section name="Navigieren" first open />
      <Tree>
        <TreeItem $indent="5px"><Expander open /><TreeLink href="#docuvita"><LogoIcon size={16} ring={RED} />docuvita</TreeLink></TreeItem>
        <TreeItem $indent="21px"><Expander /><TreeLink href="#selectline"><HouseIcon />SelectLine</TreeLink></TreeItem>
      </Tree>
      <Section name="Arbeitsmappe" open />
      <Tree>
        <TreeItem $indent="5px"><Expander open /><TreeLink href="#mappe"><BoxIcon />Arbeitsmappe</TreeLink></TreeItem>
        <TreeItem $indent="21px"><Expander /><TreeLink href="#lieferant"><TruckIcon />SLLieferant</TreeLink></TreeItem>
      </Tree>
      <Section name="Favoriten" />
      <Section name="Eingangskorb" />
      <Section name="Benutzerverwaltung" />
    </Sidebar>
  );
}

function DocumentList() {
  return (
    <ListPane>
      <PathBar aria-label="Pfad">
        <IconButton $width="14px" aria-label="Zurück"><ArrowIcon color="#333" /></IconButton>
        <IconButton $width="34px" aria-label="Vor"><ArrowIcon turn={180} /></IconButton>
        <IconButton $width="14px" aria-label="Aufwärts"><ArrowIcon turn={90} /></IconButton>
        <IconButton $width="34px" aria-label="Abwärts"><ArrowIcon turn={270} /></IconButton>
        <IconButton $width="27px" aria-label="Darstellung"><RowsIcon /><Caret /></IconButton>
        <Gap $width="7px" />
        <Crumb href="#mappe"><BoxIcon />Arbeitsmappe</Crumb>
        <Crumb href="#kunde"><TruckIcon />Musterkunde (70006)</Crumb>
        <Crumb href="#rechnung"><FolderIcon />Eingangsrechnung</Crumb>
        <EndMark aria-label="Mehr">»</EndMark>
      </PathBar>
      <ListScroll>
        <DocTable>
          <thead>
            <tr>
              <HeadCell $first $width="57px">Vorsch…</HeadCell>
              <HeadCell $width="75px">Status</HeadCell>
              <HeadCell $width="343px">Basisinformationen</HeadCell>
              <HeadCell>Allgemeine Informationen</HeadCell>
            </tr>
          </thead>
          <tbody>
            <tr>
              <Cell $pad="1px 0 0 10px"><PdfFileIcon /></Cell>
              <Cell $pad="6px 0 0 9px"><StatusGrid><CheckFaint /><LockFaint /><GearIcon /><ForwardFaint /><ClipFaint /><RecycleFaint /></StatusGrid></Cell>
              <Cell>
                <Facts $cols="75px 64px 56px 1fr">
                  <Key>Name:</Key><Val $bold $span="2 / 5">Originalbeleg Eingangsrechnung ER401</Val>
                  <Key>Beschreibung:</Key><Val $span="2 / 5" />
                  <Key>ID:</Key><Val>225</Val><Key>Objekttyp:</Key><Val>Dokument</Val>
                </Facts>
              </Cell>
              <Cell><Facts><Key>Dokumentdatum:</Key><Key>Erstellt:</Key><Key>Bearbeitet:</Key></Facts></Cell>
            </tr>
          </tbody>
        </DocTable>
      </ListScroll>
      <ScrollRow><ScrollArrow turn={270} /><ThumbX /><ScrollArrow turn={90} /></ScrollRow>
      <Pager>
        <IconButton aria-label="Erste Seite"><StepIcon bar /></IconButton>
        <IconButton aria-label="Vorige Seite"><StepIcon /></IconButton>
        <PagerPart>
          <label htmlFor="seite">Seite</label>
          <PageInput id="seite" defaultValue="1" />von 1
        </PagerPart>
        <PagerPart>
          <IconButton $width="20px" aria-label="Nächste Seite"><StepIcon next /></IconButton>
          <IconButton $width="18px" aria-label="Letzte Seite"><StepIcon next bar /></IconButton>
        </PagerPart>
        <PagerPart><IconButton $width="20px" aria-label="Aktualisieren"><SyncIcon /></IconButton></PagerPart>
        <PagerPart>
          <SizeBox>
            <SizeSelect aria-label="Einträge pro Seite"><option>25</option></SizeSelect>
            <Trigger tabIndex={-1} aria-label="Auswahl öffnen"><ChevronIcon bold /></Trigger>
          </SizeBox>
        </PagerPart>
        <SortButton>Sortierung: <Caret /></SortButton>
        <PagerPart>Elemente 1 - 1 von 1</PagerPart>
      </Pager>
    </ListPane>
  );
}

function PreviewPane() {
  return (
    <Preview>
      <TabStrip>
        <PreviewTab $active $pad="9px">Vorschau</PreviewTab>
        <PreviewTab>Eigenschaften</PreviewTab>
        <PreviewTab>Notizen <Badge>0</Badge></PreviewTab>
        <PreviewTab $pad="15px">Versionen <Badge>1</Badge></PreviewTab>
        <PreviewTab>Verlauf</PreviewTab>
        <PreviewTab>Workflow</PreviewTab>
      </TabStrip>
      <Viewer>
        <PdfBar>
          <IconButton $width="33px" $height="28px" aria-label="Seitenleiste"><SidebarIcon /></IconButton>
          <IconButton $width="24px" aria-label="Suchen"><LensIcon thin /></IconButton>
          <PdfPage aria-label="Seite" defaultValue="1" />
          <PdfCount>of 1</PdfCount>
          <IconButton $width="28px" aria-label="Verkleinern"><MinusIcon /></IconButton>
          <Rule />
          <IconButton $width="28px" aria-label="Vergrößern"><PlusIcon /></IconButton>
          <ZoomBox><ZoomSelect aria-label="Zoom"><option>Automatic Zoom</option></ZoomSelect><ChevronIcon /></ZoomBox>
          <IconButton $width="28px" aria-label="Text"><TextToolIcon /></IconButton>
          <IconButton $width="28px" aria-label="Zeichnen"><DrawToolIcon /></IconButton>
          <Gap $width="32px" />
          <Rule />
          <IconButton $width="33px" aria-label="Werkzeuge"><MoreIcon /></IconButton>
        </PdfBar>
        <PdfBody>
          <Canvas><Invoice /></Canvas>
          <ScrollY><ScrollArrow /><ThumbY /><ScrollArrow turn={180} /></ScrollY>
        </PdfBody>
      </Viewer>
    </Preview>
  );
}

export default function App() {
  return (
    <>
      <Global />
      <Window>
        <Defs />
        <TitleBar>
          <LogoBox><LogoIcon /></LogoBox>
          <MenuTab $active>Start</MenuTab>
          <MenuTab>Objekt</MenuTab>
          <MenuTab>Administration</MenuTab>
          <MenuTab>Monitoring</MenuTab>
          <Title>docuvita</Title>
          <TitleActions>
            <TitleButton $width="60px" aria-label="Benutzer"><UserIcon /></TitleButton>
            <RoleButton><GroupIcon />Systemadministratoren</RoleButton>
            <TitleButton $width="26px" aria-label="Nachrichten"><ChatIcon /></TitleButton>
            <TitleButton $width="18px" aria-label="Mehr"><Caret color="#fff" size={8} /></TitleButton>
            <TitleButton $width="30px" $big>?</TitleButton>
            <TitleButton $width="36px" aria-label="Minimieren"><MinIcon /></TitleButton>
            <TitleButton $width="32px" aria-label="Maximieren"><MaxIcon /></TitleButton>
            <TitleButton $width="36px" aria-label="Schließen"><CloseIcon /></TitleButton>
          </TitleActions>
        </TitleBar>
        <RibbonBar />
        <Work>
          <Side />
          <Splitter><SplitHandle aria-label="Seitenleiste einklappen"><Svg w={4} h={8}><path d="M4 1v6L1 4z" fill="#333" /></Svg></SplitHandle></Splitter>
          <Main>
            <TabStrip>
              <MainTab><PinIcon />Start</MainTab>
              <ActiveTab>
                <MainTab $active><FolderIcon />Navigation: 2025</MainTab>
                <TabClose aria-label="Tab schließen"><TabCloseIcon /></TabClose>
              </ActiveTab>
              <License>Lizenziert für Viebrock Datenservice GmbH -<b>Entwicklerlizenz. Nicht für die produktive Nutzung-</b></License>
            </TabStrip>
            <Panes>
              <DocumentList />
              <Splitter />
              <PreviewPane />
            </Panes>
          </Main>
        </Work>
      </Window>
    </>
  );
}
